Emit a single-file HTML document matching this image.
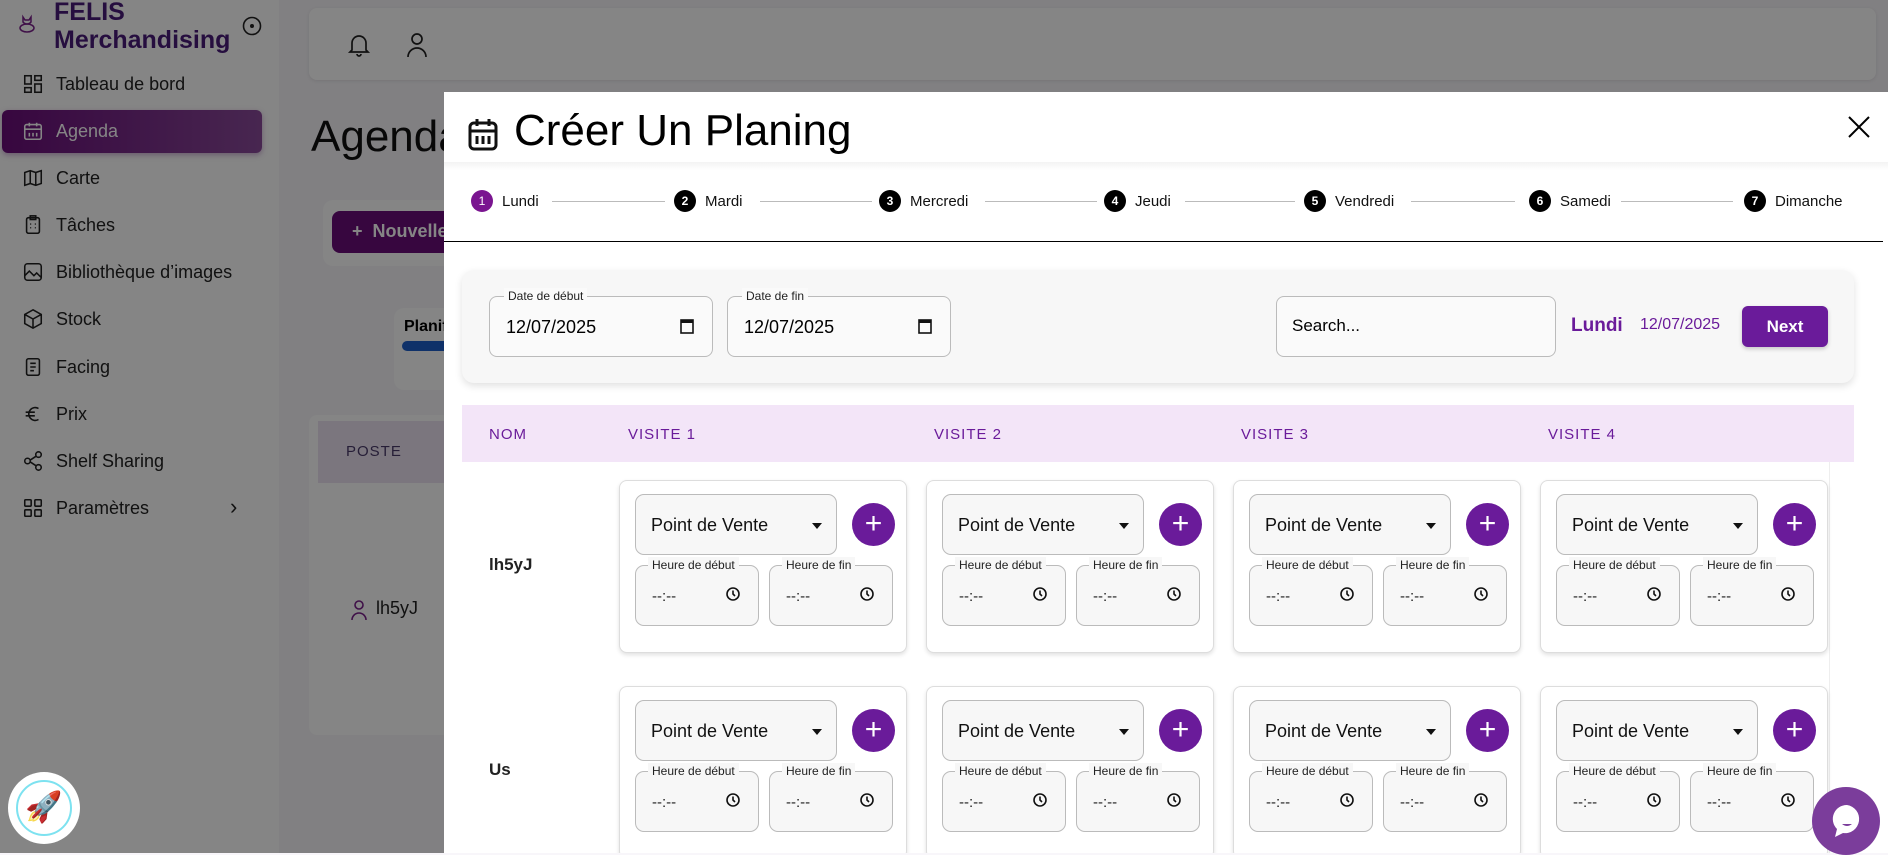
<!DOCTYPE html>
<html><head><meta charset="utf-8">
<style>
*{box-sizing:border-box;margin:0;padding:0}
body{width:1888px;height:853px;overflow:hidden;position:relative;font-family:"Liberation Sans",sans-serif;background:#f8f6fa}
.abs{position:absolute}
.side{left:0;top:0;width:279px;height:853px;background:#fff}
.logo{left:54px;top:-2px;font-size:25px;font-weight:bold;color:#4a1b7a;line-height:28px}
.mi{position:absolute;left:22px;font-size:18px;color:#222;display:flex;align-items:center;gap:12px;height:44px}
.mi svg{width:22px;height:22px;stroke:#222;fill:none;stroke-width:1.7}
.overlay{left:0;top:0;width:1888px;height:853px;background:rgba(0,0,0,0.48)}
.modal{left:444px;top:92px;width:1444px;height:761px;background:#fff;overflow:hidden}
.step{position:absolute;top:98px;display:flex;align-items:center;gap:9px;font-size:15px;color:#111}
.step b{display:inline-block;width:22px;height:22px;border-radius:50%;background:#000;color:#fff;font-size:12px;text-align:center;line-height:22px;font-weight:bold}
.sline{position:absolute;top:109px;height:1px;background:#bbb}
.fld{position:absolute;border:1px solid #bbb;border-radius:8px;background:#fafafa}
.lbl{position:absolute;top:-9px;left:14px;background:#fafafa;padding:0 4px;font-size:12px;color:#222;line-height:16px}
.card{position:absolute;width:288px;height:173px;background:#fff;border:1px solid #ddd;border-radius:8px;box-shadow:0 2px 4px rgba(0,0,0,.12)}
.sel{position:absolute;left:15px;top:13px;width:202px;height:61px;border:1px solid #bbb;border-radius:9px;background:#f7f7f7;font-size:18px;color:#111;padding:20px 0 0 15px}
.sel:after{content:"";position:absolute;right:14px;top:28px;border:5px solid transparent;border-top:6px solid #111}
.plus{position:absolute;left:232px;top:22px;width:43px;height:43px;border-radius:50%;background:#6a1b9a;color:#fff;font-size:30px;text-align:center;line-height:41px}
.tm{position:absolute;top:84px;width:124px;height:61px;border:1px solid #bbb;border-radius:9px;background:#f7f7f7}
.tm .lbl{background:#f7f7f7;left:12px}
.tm span{position:absolute;left:16px;top:22px;font-size:15px;color:#222}
.tm svg{position:absolute;right:18px;top:21px}
.hdr{position:absolute;top:375px;font-size:15px;color:#6a1b9a;letter-spacing:1px}
</style></head><body>
<div class="abs side"></div>
<svg class="abs" style="left:17px;top:14px" width="20" height="22" viewBox="0 0 20 22" fill="none" stroke="#7a1f8a" stroke-width="1.5"><path d="M6 3l2 3h4l2-3v5a5 5 0 01-8 0z"/><ellipse cx="10" cy="14" rx="7" ry="4"/></svg>
<div class="abs logo">FELIS<br>Merchandising</div>
<svg class="abs" style="left:242px;top:16px" width="20" height="20" viewBox="0 0 20 20" fill="none" stroke="#222" stroke-width="1.6"><circle cx="10" cy="10" r="8.5"/><circle cx="10" cy="10" r="1.2" fill="#222"/></svg>
<div class="abs" style="left:2px;top:110px;width:260px;height:43px;border-radius:6px;background:linear-gradient(90deg,#6a0d7a,#8a4a9a);box-shadow:0 2px 6px rgba(120,40,140,.4)"></div>
<div class="mi" style="top:62px"><svg viewBox="0 0 24 24"><rect x="3" y="3" width="7" height="9"/><rect x="14" y="3" width="7" height="5"/><rect x="14" y="12" width="7" height="9"/><rect x="3" y="16" width="7" height="5"/></svg>Tableau de bord</div>
<div class="mi" style="top:109px;color:#fff"><svg viewBox="0 0 24 24" style="stroke:#fff"><rect x="3" y="5" width="18" height="16" rx="2"/><path d="M3 10h18M8 3v4M16 3v4M8 14v4M12 14v4M16 14v4"/></svg>Agenda</div>
<div class="mi" style="top:156px"><svg viewBox="0 0 24 24"><path d="M3 6l6-2 6 2 6-2v14l-6 2-6-2-6 2zM9 4v14M15 6v14"/></svg>Carte</div>
<div class="mi" style="top:203px"><svg viewBox="0 0 24 24"><rect x="5" y="4" width="14" height="17" rx="2"/><rect x="9" y="2" width="6" height="4"/><path d="M9 11h1M14 11h1M9 15h1M14 15h1"/></svg>Tâches</div>
<div class="mi" style="top:250px"><svg viewBox="0 0 24 24"><rect x="3" y="3" width="18" height="18" rx="3"/><path d="M3 16l5-5 5 5 3-3 5 5"/></svg>Bibliothèque d’images</div>
<div class="mi" style="top:297px"><svg viewBox="0 0 24 24"><path d="M12 2l9 5v10l-9 5-9-5V7zM3 7l9 5 9-5M12 12v10"/></svg>Stock</div>
<div class="mi" style="top:345px"><svg viewBox="0 0 24 24"><rect x="5" y="3" width="14" height="18" rx="2"/><path d="M9 8h6M9 12h6M9 16h4"/></svg>Facing</div>
<div class="mi" style="top:392px"><svg viewBox="0 0 24 24"><path d="M18 6a7 7 0 100 12M4 10h10M4 14h10"/></svg>Prix</div>
<div class="mi" style="top:439px"><svg viewBox="0 0 24 24"><circle cx="6" cy="12" r="3"/><circle cx="18" cy="5" r="3"/><circle cx="18" cy="19" r="3"/><path d="M9 11l6-4M9 13l6 4"/></svg>Shelf Sharing</div>
<div class="mi" style="top:486px"><svg viewBox="0 0 24 24"><rect x="3" y="3" width="7" height="7" rx="1"/><rect x="14" y="3" width="7" height="7" rx="1"/><rect x="3" y="14" width="7" height="7" rx="1"/><rect x="14" y="14" width="7" height="7" rx="1"/></svg>Paramètres</div>
<div class="abs" style="left:230px;top:494px;font-size:22px;color:#222">&#8250;</div>
<div class="abs" style="left:309px;top:8px;width:1567px;height:72px;background:#fff;border-radius:8px;box-shadow:0 1px 4px rgba(0,0,0,.1)"></div>
<svg class="abs" style="left:347px;top:32px" width="24" height="26" viewBox="0 0 24 26" fill="none" stroke="#222" stroke-width="1.7"><path d="M5 18V11a7 7 0 0114 0v7l2 2H3zM10 22a2 2 0 004 0"/></svg>
<svg class="abs" style="left:406px;top:32px" width="22" height="26" viewBox="0 0 22 26" fill="none" stroke="#222" stroke-width="1.7"><circle cx="11" cy="7" r="5"/><path d="M2 25a9 9 0 0118 0"/></svg>
<div class="abs" style="left:311px;top:112px;font-size:44px;color:#111">Agenda</div>
<div class="abs" style="left:323px;top:200px;width:200px;height:66px;background:#fff;border-radius:10px"></div>
<div class="abs" style="left:332px;top:211px;width:160px;height:42px;background:#6a0d7a;border-radius:8px;color:#fff;font-size:18px;font-weight:bold;padding:10px 0 0 20px">+ &nbsp;Nouvelle</div>
<div class="abs" style="left:394px;top:308px;width:100px;height:82px;background:#fff;border-radius:10px;font-weight:bold;font-size:16px;padding:10px">Planif</div>
<div class="abs" style="left:402px;top:341px;width:60px;height:10px;background:#1d5fc9;border-radius:5px"></div>
<div class="abs" style="left:309px;top:415px;width:200px;height:320px;background:#fff;border-radius:8px"></div>
<div class="abs" style="left:318px;top:421px;width:150px;height:62px;background:#ece3f2;font-size:15px;letter-spacing:1px;color:#4a3a6a;padding:22px 0 0 28px">POSTE</div>
<svg class="abs" style="left:350px;top:599px" width="18" height="22" viewBox="0 0 18 22" fill="none" stroke="#7a1f8a" stroke-width="1.6"><circle cx="9" cy="6" r="4"/><path d="M2 21a7 7 0 0114 0"/></svg>
<div class="abs" style="left:376px;top:598px;font-size:18px;color:#222">lh5yJ</div>
<div class="abs overlay"></div>
<div class="abs" style="left:8px;top:772px;width:72px;height:72px;border-radius:50%;background:#fff"></div>
<div class="abs" style="left:16px;top:780px;width:56px;height:56px;border-radius:50%;border:2px solid #7de2f0;font-size:30px;text-align:center;line-height:52px">🚀</div>
<div class="abs modal">
 <svg class="abs" style="left:24px;top:25px" width="30" height="34" viewBox="0 0 30 34" fill="none" stroke="#111" stroke-width="3"><rect x="2" y="6" width="26" height="26" rx="4"/><path d="M2 14h26M9 2v7M21 2v7M9 19v8M15 19v8M21 19v8"/></svg>
 <div class="abs" style="left:70px;top:14px;font-size:44px;color:#000">Créer Un Planing</div>
 <svg class="abs" style="left:1404px;top:24px" width="22" height="22" viewBox="0 0 22 22" stroke="#000" stroke-width="2"><path d="M1 1l20 20M21 1L1 21"/></svg>
 <div class="abs" style="left:0;top:70px;width:1444px;height:8px;background:linear-gradient(#f3f3f3,#fff)"></div>
 <div class="step" style="left:27px"><b style="background:#7a1590;font-weight:normal">1</b>Lundi</div>
 <div class="sline" style="left:108px;width:113px"></div>
 <div class="step" style="left:230px"><b>2</b>Mardi</div>
 <div class="sline" style="left:316px;width:112px"></div>
 <div class="step" style="left:435px"><b>3</b>Mercredi</div>
 <div class="sline" style="left:541px;width:112px"></div>
 <div class="step" style="left:660px"><b>4</b>Jeudi</div>
 <div class="sline" style="left:741px;width:110px"></div>
 <div class="step" style="left:860px"><b>5</b>Vendredi</div>
 <div class="sline" style="left:967px;width:104px"></div>
 <div class="step" style="left:1085px"><b>6</b>Samedi</div>
 <div class="sline" style="left:1177px;width:112px"></div>
 <div class="step" style="left:1300px"><b>7</b>Dimanche</div>
 <div class="abs" style="left:0;top:149px;width:1439px;height:1px;background:#000"></div>
 <div class="abs" style="left:18px;top:178px;width:1392px;height:113px;background:#f7f7f7;border-radius:12px;box-shadow:0 3px 8px rgba(0,0,0,.12)"></div>
 <div class="fld" style="left:45px;top:204px;width:224px;height:61px"><div class="lbl">Date de début</div><span class="abs" style="left:16px;top:20px;font-size:18px">12/07/2025</span><svg class="abs" style="left:190px;top:21px" width="14" height="16" viewBox="0 0 14 16"><rect x="1" y="2" width="12" height="13" fill="none" stroke="#111" stroke-width="1.6"/><rect x="1" y="2" width="12" height="3" fill="#111"/></svg></div>
 <div class="fld" style="left:283px;top:204px;width:224px;height:61px"><div class="lbl">Date de fin</div><span class="abs" style="left:16px;top:20px;font-size:18px">12/07/2025</span><svg class="abs" style="left:190px;top:21px" width="14" height="16" viewBox="0 0 14 16"><rect x="1" y="2" width="12" height="13" fill="none" stroke="#111" stroke-width="1.6"/><rect x="1" y="2" width="12" height="3" fill="#111"/></svg></div>
 <div class="fld" style="left:832px;top:204px;width:280px;height:61px"><span class="abs" style="left:15px;top:19px;font-size:17px">Search...</span></div>
 <div class="abs" style="left:1127px;top:223px;font-size:19px;font-weight:bold;color:#6a1b9a">Lundi</div>
 <div class="abs" style="left:1196px;top:224px;font-size:16px;color:#6a1b9a">12/07/2025</div>
 <div class="abs" style="left:1298px;top:214px;width:86px;height:41px;background:#6a1b9a;border-radius:6px;color:#fff;font-weight:bold;font-size:17px;text-align:center;line-height:41px;box-shadow:0 2px 4px rgba(0,0,0,.2)">Next</div>
 <div class="abs" style="left:18px;top:313px;width:1392px;height:57px;background:#f3e5f8"></div>
 <div class="hdr" style="left:45px;top:334px">NOM</div>
 <div class="hdr" style="left:184px;top:334px">VISITE 1</div>
 <div class="hdr" style="left:490px;top:334px">VISITE 2</div>
 <div class="hdr" style="left:797px;top:334px">VISITE 3</div>
 <div class="hdr" style="left:1104px;top:334px">VISITE 4</div>
 <div class="abs" style="left:45px;top:463px;font-size:17px;font-weight:bold;color:#222">lh5yJ</div>
 <div class="abs" style="left:45px;top:668px;font-size:17px;font-weight:bold;color:#222">Us</div>
 <div class="abs" style="left:1385px;top:370px;width:1px;height:400px;background:#eee"></div>
 <div id="cards"></div>
</div>
<div class="abs" style="left:1812px;top:787px;width:68px;height:68px;border-radius:50%;background:#7b3d9b"></div>
<svg class="abs" style="left:1830px;top:803px" width="34" height="36" viewBox="0 0 34 36"><path d="M17 2a14 14 0 00-10 24l-2 8 8-4a14 14 0 104-28z" fill="#fff"/><path d="M12 21q5 4 10 0" fill="#7b3d9b"/></svg>
<script>
var xs=[175,482,789,1096],ys=[388,594],h='';
var clk='<svg width="14" height="14" viewBox="0 0 14 14" fill="none" stroke="#111" stroke-width="1.6"><circle cx="7" cy="7" r="6"/><path d="M7 3.5V7l2 2"/></svg>';
ys.forEach(function(y){xs.forEach(function(x){
h+='<div class="card" style="left:'+x+'px;top:'+y+'px"><div class="sel">Point de Vente</div><div class="plus">+</div>'+
'<div class="tm" style="left:15px"><div class="lbl">Heure de début</div><span>--:--</span>'+clk+'</div>'+
'<div class="tm" style="left:149px"><div class="lbl">Heure de fin</div><span>--:--</span>'+clk+'</div></div>';});});
document.getElementById('cards').innerHTML=h;
</script>
</body></html>
